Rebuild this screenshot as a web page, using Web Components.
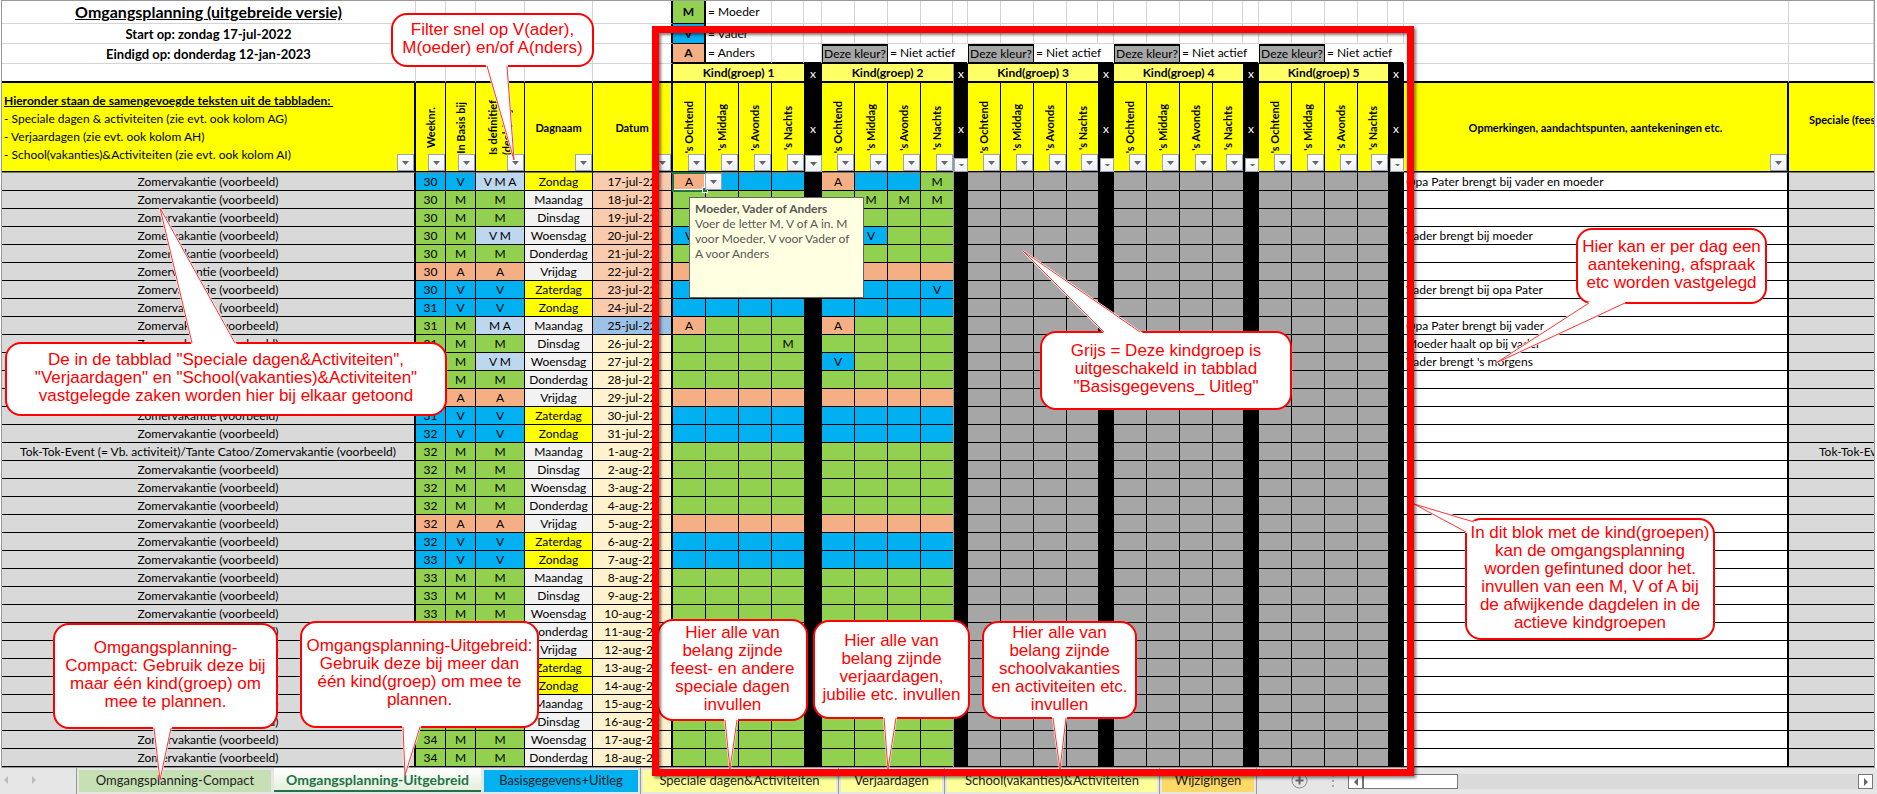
<!DOCTYPE html>
<html lang="nl">
<head>
<meta charset="utf-8">
<title>Omgangsplanning</title>
<style>
    body {
        margin: 0;
        position: relative;
        background: white;
        color: black;
        overflow: hidden;
        font: 12px/17px Lato, "Liberation Sans", sans-serif;
    }
</style>
</head>
<body>
<planning-sheet></planning-sheet>
<sheet-tabs></sheet-tabs>

<input-hint>
    <b slot="title">Moeder, Vader of Anders</b>
    Voer de letter M, V of A in. M voor Moeder, V voor Vader of A voor Anders
</input-hint>

<callout-note box="392 14 201 52" tail="487 66 514 160 507 66">Filter snel op V(ader),<br>M(oeder) en/of A(nders)</callout-note>
<callout-note box="6 343 440 72" tail="192 343 160 208 235 343">De in de tabblad "Speciale dagen&amp;Activiteiten",<br>"Verjaardagen" en "School(vakanties)&amp;Activiteiten"<br>vastgelegde zaken worden hier bij elkaar getoond</callout-note>
<callout-note box="1041 332 250 77" tail="1104 332 1023 251 1140 332">Grijs = Deze kindgroep is<br>uitgeschakeld in tabblad<br>"Basisgegevens_ Uitleg"</callout-note>
<callout-note box="1577 229 189 74" tail="1589 303 1496 363 1625 303">Hier kan er per dag een<br>aantekening, afspraak<br>etc worden vastgelegd</callout-note>
<callout-note box="1466 519 248 120" tail="1474 522 1414 504 1466 532">In dit blok met de kind(groepen)<br>kan de omgangsplanning<br>worden gefintuned door het.<br>invullen van een M, V of A bij<br>de afwijkende dagdelen in de<br>actieve kindgroepen</callout-note>
<callout-note box="54 624 223 104" tail="154 728 160 780 171 728">Omgangsplanning-<br>Compact: Gebruik deze bij<br>maar één kind(groep) om<br>mee te plannen.</callout-note>
<callout-note box="301 622 237 105" tail="403 727 405 775 420 727">Omgangsplanning-Uitgebreid:<br>Gebruik deze bij meer dan<br>één kind(groep) om mee te<br>plannen.</callout-note>
<callout-note box="658 620 149 100" tail="725 720 730 769 737 720">Hier alle van<br>belang zijnde<br>feest- en andere<br>speciale dagen<br>invullen</callout-note>
<callout-note box="814 621 155 97" tail="884 718 888 769 896 718">Hier alle van<br>belang zijnde<br>verjaardagen,<br>jubilie etc. invullen</callout-note>
<callout-note box="983 622 153 96" tail="1053 718 1060 769 1066 718">Hier alle van<br>belang zijnde<br>schoolvakanties<br>en activiteiten etc.<br>invullen</callout-note>

<focus-frame></focus-frame>

<script>
class FilterButtonComponent extends HTMLElement
{
    constructor()
    {
        super();
        this.shadow = this.attachShadow({ mode:"open" })
    }
    connectedCallback()
    {
        this.render();
    }
    render()
    {
        this.shadow.innerHTML = `
            <style>
                :host {
                    display: block;
                    width: 17px;
                    height: 17px;
                }
                :host([small]) {
                    width: 14px;
                    height: 14px;
                }
                button {
                    display: flex;
                    align-items: center;
                    justify-content: center;
                    width: 100%;
                    height: 100%;
                    padding: 0;
                    box-sizing: border-box;
                    border: 1px solid #9ba3b2;
                    background: linear-gradient(#ffffff, #eef0f4);
                }
            </style>
            <button aria-label="${this.getAttribute("label") || "Filter"}">
                <svg width="7" height="4" viewBox="0 0 7 4">
                    <path d="${this.hasAttribute("small") ? "M1 1h5L4 3H3z" : "M0 0h7L3.5 4z"}" fill="#666"/>
                </svg>
            </button>
        `
    }
}
customElements.define("filter-button", FilterButtonComponent)

const GROUPS = [1, 2, 3, 4, 5]
const PARTS = ["'s Ochtend", "'s Middag", "'s Avonds", "'s Nachts"]
const X_WIDTHS = [18, 15, 16, 16, 16]
const LAST_WIDTHS = [32, 32, 31, 30, 30]
const DAYS = ["Zondag", "Maandag", "Dinsdag", "Woensdag", "Donderdag", "Vrijdag", "Zaterdag"]
// basis per dag, vanaf zondag 17-jul
const BASIS = "VMMMMAVVMMMMAVVMMMMAVVMMMMAVVMMMM"
const COMBINED = { 0:"V M A", 3:"V M", 8:"M A", 10:"V M" }
// afwijkende dagdelen: rij-groep-dagdeel
const CHANGES = {
    "0-1-0":"A", "0-2-0":"A", "0-2-3":"M",
    "1-2-1":"M", "1-2-2":"M", "1-2-3":"M",
    "3-1-0":"V", "3-2-1":"V", "6-2-3":"V",
    "8-1-0":"A", "8-2-0":"A", "9-1-3":"M", "10-2-0":"V"
}
const NOTES = {
    0:"Opa Pater brengt bij vader en moeder",
    3:"Vader brengt bij moeder",
    6:"Vader brengt bij opa Pater",
    8:"Opa Pater brengt bij vader",
    9:"Moeder haalt op bij vader",
    10:"Vader brengt 's morgens"
}

class PlanningSheetComponent extends HTMLElement
{
    constructor()
    {
        super();
        this.shadow = this.attachShadow({ mode:"open" })
    }
    connectedCallback()
    {
        this.render();
    }
    style()
    {
        return `
            <style>
                :host {
                    display: block;
                    padding: 0 2px 0 1px;
                    overflow: hidden;
                }
                table {
                    width: 100%;
                    table-layout: fixed;
                    border-collapse: separate;
                    border-spacing: 0;
                    border: 1px solid #999;
                    box-sizing: border-box;
                }
                th, td {
                    box-sizing: border-box;
                    padding: 0;
                    height: 18px;
                    text-align: center;
                    vertical-align: middle;
                    white-space: nowrap;
                    overflow: hidden;
                    border-right: 1px solid black;
                    border-bottom: 1px solid black;
                }
                .top td {
                    height: 20px;
                    line-height: 16px;
                    border-color: #d4d4d4;
                }
                .top.first td {
                    height: 23px;
                }
                .top .title {
                    font-size: 16px;
                    font-weight: bold;
                    text-decoration: underline;
                }
                .top .period {
                    font-size: 13px;
                    font-weight: bold;
                }
                .top .key {
                    font-weight: bold;
                    border: 2px solid black;
                    border-width: 0 2px 1px 0;
                }
                .top .edge {
                    border-right: 2px solid black;
                }
                .top .meaning {
                    text-align: left;
                    padding-left: 2px;
                }
                .top .inactive {
                    border: 2px solid black;
                    border-width: 2px 1px;
                    background: #a6a6a6;
                }
                .top .line {
                    border-bottom: 2px solid black;
                }
                .top .plain {
                    border-right-color: white;
                }
                .kids td {
                    height: 19px;
                    line-height: 16px;
                    border-right-color: #d4d4d4;
                    border-bottom: 2px solid black;
                }
                .kids .kid {
                    background: #ffff66;
                    font-weight: bold;
                    border-right: 0;
                }
                .kids .edge {
                    border-right: 2px solid black;
                }
                .head th {
                    position: relative;
                    height: 90px;
                    font-size: 11px;
                    background: #ffff00;
                    border-bottom: 1px solid #777;
                    box-shadow: inset 0 -1px black;
                }
                .head .intro {
                    text-align: left;
                    font-size: 12px;
                    font-weight: normal;
                    line-height: 18px;
                    padding-left: 2px;
                }
                .head filter-button {
                    position: absolute;
                    right: 0;
                    bottom: 1px;
                }
                .up {
                    display: inline-block;
                    writing-mode: vertical-rl;
                    transform: rotate(180deg);
                    line-height: 14px;
                    text-align: left;
                    vertical-align: middle;
                }
                .wide, .thick {
                    border-right-width: 2px;
                }
                .M { background: #92d050; }
                .V { background: #00b0f0; }
                .A { background: #f4b084; }
                .mix { background: #bdd7ee; }
                .off { background: #a6a6a6; }
                .special { background: #d9d9d9; }
                .day { background: #f2f2f2; }
                .weekend { background: #ffff00; }
                .july { background: #f8cbad; }
                .today { background: #9bc2e6; }
                .later { background: #fff2cc; }
                td.x, .head th.x {
                    background: black;
                    color: white;
                    border: 0;
                    font-size: 12px;
                    font-weight: normal;
                }
                td.x.frozen, .head th.x.frozen {
                    border-left: 1px solid #999;
                }
                .end {
                    border-right: 0;
                }
                .note {
                    text-align: left;
                    padding-left: 2px;
                }
                .head .over {
                    text-align: left;
                    padding: 0 0 17px 20px;
                    border-right: 0;
                }
                .extra {
                    text-align: left;
                    padding-left: 30px;
                    background: #d9d9d9;
                    border-right: 0;
                }
                .selected {
                    position: relative;
                    overflow: visible;
                    box-shadow: inset 0 0 0 1px white;
                    outline: 2px solid #217346;
                    outline-offset: -1px;
                }
                .selected::after {
                    content: "";
                    position: absolute;
                    right: -3px;
                    bottom: -3px;
                    width: 4px;
                    height: 4px;
                    border: 1px solid white;
                    background: #217346;
                }
                .selected filter-button {
                    position: absolute;
                    left: 100%;
                    top: 0;
                    z-index: 1;
                }
            </style>
        `
    }
    columns()
    {
        const kids = GROUPS.map((g, i) => `
            <col style="width:33px"><col style="width:33px"><col style="width:33px">
            <col style="width:${LAST_WIDTHS[i]}px"><col style="width:${X_WIDTHS[i]}px">`).join("")
        return `
            <colgroup>
                <col style="width:414px"><col style="width:30px"><col style="width:30px">
                <col style="width:49px"><col style="width:68px"><col style="width:80px">
                ${kids}
                <col><col style="width:85px">
            </colgroup>
        `
    }
    legend()
    {
        const blank = (n) => "<td></td>".repeat(n)
        const inactive = [2, 3, 4, 5].map(() => `
            <td class="inactive" colspan="2">Deze kleur?</td>
            <td class="meaning plain line" colspan="3">= Niet actief</td>`).join("")
        const kids = GROUPS.map((g) => `
            <td class="kid" colspan="4">Kind(groep) ${g}</td>
            <td class="x${g == 2 ? " frozen" : ""}">x</td>`).join("")
        return `
            <tr class="top first">
                <td class="title">Omgangsplanning (uitgebreide versie)</td>
                ${blank(4)}<td class="edge"></td>
                <td class="key M">M</td><td class="meaning" colspan="2">= Moeder</td>${blank(24)}
            </tr>
            <tr class="top">
                <td class="period">Start op: zondag 17-jul-2022</td>
                ${blank(4)}<td class="edge"></td>
                <td class="key V">V</td><td class="meaning" colspan="2">= Vader</td>${blank(24)}
            </tr>
            <tr class="top">
                <td class="period">Eindigd op: donderdag 12-jan-2023</td>
                ${blank(4)}<td class="edge"></td>
                <td class="key A line">A</td><td class="meaning line" colspan="2">= Anders</td>
                <td class="line"></td><td class="line"></td>${inactive}${blank(2)}
            </tr>
            <tr class="kids">
                ${blank(5)}<td class="edge"></td>${kids}${blank(2)}
            </tr>
        `
    }
    head()
    {
        const filter = "<filter-button></filter-button>"
        const kids = GROUPS.map((g) =>
            PARTS.map((p, i) => `<th class="${i == 3 ? "end" : ""}"><span class="up">${p}</span>${filter}</th>`).join("") +
            `<th class="x${g == 2 ? " frozen" : ""}">x<filter-button ${g == 1 ? "" : "small"}></filter-button></th>`).join("")
        return `
            <tr class="head">
                <th class="intro wide">
                    <b><u>Hieronder staan de samengevoegde teksten uit de tabbladen:&nbsp;</u></b><br>
                    - Speciale dagen &amp; activiteiten (zie evt. ook kolom AG)<br>
                    - Verjaardagen (zie evt. ook kolom AH)<br>
                    - School(vakanties)&amp;Activiteiten (zie evt. ook kolom AI)${filter}
                </th>
                <th><span class="up">Weeknr.</span>${filter}</th>
                <th><span class="up">In Basis bij</span>${filter}</th>
                <th><span class="up">Is definitief<br>(deels) bij</span>${filter}</th>
                <th>Dagnaam${filter}</th>
                <th class="thick">Datum${filter}</th>
                ${kids}
                <th class="thick">Opmerkingen, aandachtspunten, aantekeningen etc.${filter}</th>
                <th class="over">Speciale (feest)</th>
            </tr>
        `
    }
    cell(row, group, part)
    {
        const end = part == 3 ? " end" : ""
        if (group > 2) return `<td class="off${end}"></td>`
        const change = CHANGES[`${row}-${group}-${part}`]
        const selected = row == 0 && group == 1 && part == 0
        return `<td class="${change || BASIS[row]}${end}${selected ? " selected" : ""}">${change || ""}${
            selected ? `<filter-button label="Kies M, V of A"></filter-button>` : ""}</td>`
    }
    row(basis, i)
    {
        const day = DAYS[i % 7]
        const date = i < 15 ? `${17 + i}-jul-22` : `${i - 14}-aug-22`
        const dateClass = i < 8 ? "july" : i == 8 ? "today" : "later"
        const kids = GROUPS.map((g) =>
            PARTS.map((p, part) => this.cell(i, g, part)).join("") +
            `<td class="x${g == 2 ? " frozen" : ""}"></td>`).join("")
        return `
            <tr>
                <td class="special wide">${i == 15 ? "Tok-Tok-Event (= Vb. activiteit)/Tante Catoo/" : ""}Zomervakantie (voorbeeld)</td>
                <td class="${basis}">${30 + Math.floor(i / 7)}</td>
                <td class="${basis}">${basis}</td>
                <td class="${COMBINED[i] ? "mix" : basis}">${COMBINED[i] || basis}</td>
                <td class="${i % 7 == 0 || i % 7 == 6 ? "weekend" : "day"}">${day}</td>
                <td class="${dateClass} thick">${date}</td>
                ${kids}
                <td class="note thick">${NOTES[i] || ""}</td>
                <td class="extra">${i == 15 ? "Tok-Tok-Event" : ""}</td>
            </tr>
        `
    }
    render()
    {
        this.shadow.innerHTML = `
            ${this.style()}
            <table>
                ${this.columns()}
                <thead>${this.legend()}${this.head()}</thead>
                <tbody>${[...BASIS].map((b, i) => this.row(b, i)).join("")}</tbody>
            </table>
        `
    }
}
customElements.define("planning-sheet", PlanningSheetComponent)

class InputHintComponent extends HTMLElement
{
    constructor()
    {
        super();
        this.shadow = this.attachShadow({ mode:"open" })
    }
    connectedCallback()
    {
        this.shadow.innerHTML = `
            <style>
                :host {
                    display: block;
                    position: absolute;
                    left: 689px;
                    top: 197px;
                    width: 175px;
                    height: 101px;
                    box-sizing: border-box;
                    padding: 3px 5px;
                    border: 1px solid #646464;
                    background: #ffffe1;
                    color: #575757;
                    line-height: 15px;
                }
                ::slotted(b) {
                    display: block;
                }
            </style>
            <slot name="title"></slot>
            <slot></slot>
        `
    }
}
customElements.define("input-hint", InputHintComponent)

class CalloutNoteComponent extends HTMLElement
{
    constructor()
    {
        super();
        this.shadow = this.attachShadow({ mode:"open" })
    }
    connectedCallback()
    {
        this.render();
    }
    numbers(name)
    {
        return this.getAttribute(name).split(" ").map(Number)
    }
    render()
    {
        const [x, y, w, h] = this.numbers("box")
        const t = this.numbers("tail").map((n, i) => n - (i % 2 ? y : x))
        const tail = `${t[0]},${t[1]} ${t[2]},${t[3]} ${t[4]},${t[5]}`
        this.shadow.innerHTML = `
            <style>
                :host {
                    display: flex;
                    align-items: center;
                    justify-content: center;
                    position: absolute;
                    left: ${x}px;
                    top: ${y}px;
                    width: ${w}px;
                    height: ${h}px;
                    box-sizing: border-box;
                    padding-bottom: 3px;
                    color: red;
                    font: 17px/18px "Liberation Sans", Arial, sans-serif;
                    text-align: center;
                    white-space: nowrap;
                }
                svg {
                    position: absolute;
                    left: 0;
                    top: 0;
                    overflow: visible;
                }
                div {
                    position: relative;
                }
            </style>
            <svg width="${w}" height="${h}">
                <rect x="0" y="0" width="${w}" height="${h}" rx="15" fill="white" stroke="red" stroke-width="2"/>
                <polygon points="${tail}" fill="white" stroke="white" stroke-width="2"/>
                <polyline points="${tail}" fill="none" stroke="#f33" stroke-width="1"/>
            </svg>
            <div><slot></slot></div>
        `
    }
}
customElements.define("callout-note", CalloutNoteComponent)

class FocusFrameComponent extends HTMLElement
{
    constructor()
    {
        super();
        this.shadow = this.attachShadow({ mode:"open" })
    }
    connectedCallback()
    {
        this.shadow.innerHTML = `
            <style>
                :host {
                    display: block;
                    position: absolute;
                    left: 652px;
                    top: 26px;
                    width: 762px;
                    height: 750px;
                    box-sizing: border-box;
                    border: 7px solid red;
                    box-shadow: 2px 2px 3px rgba(0,0,0,.5), inset 2px 2px 3px rgba(0,0,0,.5);
                    pointer-events: none;
                }
            </style>
        `
    }
}
customElements.define("focus-frame", FocusFrameComponent)

class SheetTabsComponent extends HTMLElement
{
    constructor()
    {
        super();
        this.shadow = this.attachShadow({ mode:"open" })
    }
    connectedCallback()
    {
        this.render();
    }
    style()
    {
        return `
            <style>
                :host {
                    display: flex;
                    height: 26px;
                    background: #e6e6e6;
                    font-size: 13px;
                }
                button {
                    padding: 0;
                    border: 0;
                    background: none;
                    font: inherit;
                    color: inherit;
                }
                svg {
                    display: block;
                }
                .arrows {
                    display: flex;
                    gap: 22px;
                    width: 76px;
                    padding: 8px 0 0 3px;
                    box-sizing: border-box;
                    align-items: flex-start;
                }
                .tab {
                    display: flex;
                    padding: 2px;
                    border-left: 1px solid #999;
                    box-sizing: border-box;
                }
                .tab button {
                    flex: 1;
                    padding-bottom: 2px;
                    color: #222;
                    white-space: nowrap;
                }
                .tab.active {
                    padding: 0 1px 2px;
                    border-left: 0;
                }
                .tab.active button {
                    padding: 0;
                    background: linear-gradient(white, #e4efdc);
                    border-bottom: 2px solid #217346;
                    color: #217346;
                    font-size: 14px;
                    font-weight: bold;
                }
                .tab.active + .tab {
                    border-left: 0;
                }
                .close {
                    border-left: 1px solid #999;
                }
                .add {
                    margin: 4px 24px 0 34px;
                    align-self: flex-start;
                }
                .grip {
                    margin-top: 7px;
                }
                .scroll {
                    display: flex;
                    flex: 1;
                    height: 15px;
                    margin: 6px 4px 0 14px;
                    background: #dadada;
                }
                .scroll button, .thumb {
                    display: flex;
                    align-items: center;
                    justify-content: center;
                    width: 15px;
                    box-sizing: border-box;
                    border: 1px solid #777;
                    background: white;
                }
                .scroll .thumb {
                    width: 95px;
                    margin-right: auto;
                }
            </style>
        `
    }
    tab(name, width, color, active)
    {
        return `
            <div class="tab ${active ? "active" : ""}" style="width:${width}px">
                <button style="${color ? `background:${color}` : ""}">${name}</button>
            </div>
        `
    }
    render()
    {
        const left = (fill) => `<svg width="6" height="8"><path d="M5 0v8L1 4z" fill="${fill}"/></svg>`
        const right = (fill) => `<svg width="6" height="8"><path d="M1 0v8l4-4z" fill="${fill}"/></svg>`
        this.shadow.innerHTML = `
            ${this.style()}
            <div class="arrows">
                <button aria-label="Vorige">${left("#bbb")}</button>
                <button aria-label="Volgende">${right("#bbb")}</button>
            </div>
            ${this.tab("Omgangsplanning-Compact", 197, "#c6e0b4")}
            ${this.tab("Omgangsplanning-Uitgebreid", 209, "", true)}
            ${this.tab("Basisgegevens+Uitleg", 158, "#00b0f0")}
            ${this.tab("Speciale dagen&amp;Activiteiten", 198, "#ffff99")}
            ${this.tab("Verjaardagen", 106, "#ffff99")}
            ${this.tab("School(vakanties)&amp;Activiteiten", 215, "#ffff99")}
            ${this.tab("Wijzigingen", 97, "#ffd966")}
            <div class="close"></div>
            <button class="add" aria-label="Nieuw blad">
                <svg width="17" height="17" viewBox="0 0 17 17" fill="none" stroke="#888">
                    <circle cx="8.5" cy="8.5" r="7.5"/>
                    <path d="M8.500 4.500v8M4.500 8.500h8" stroke="#666" stroke-width="2"/>
                </svg>
            </button>
            <svg class="grip" width="2" height="12" fill="#aaa">
                <rect width="2" height="2"/><rect y="5" width="2" height="2"/><rect y="10" width="2" height="2"/>
            </svg>
            <div class="scroll">
                <button aria-label="Naar links">${left("#666")}</button>
                <div class="thumb"></div>
                <button aria-label="Naar rechts">${right("#666")}</button>
            </div>
        `
    }
}
customElements.define("sheet-tabs", SheetTabsComponent)
</script>
</body>
</html>
